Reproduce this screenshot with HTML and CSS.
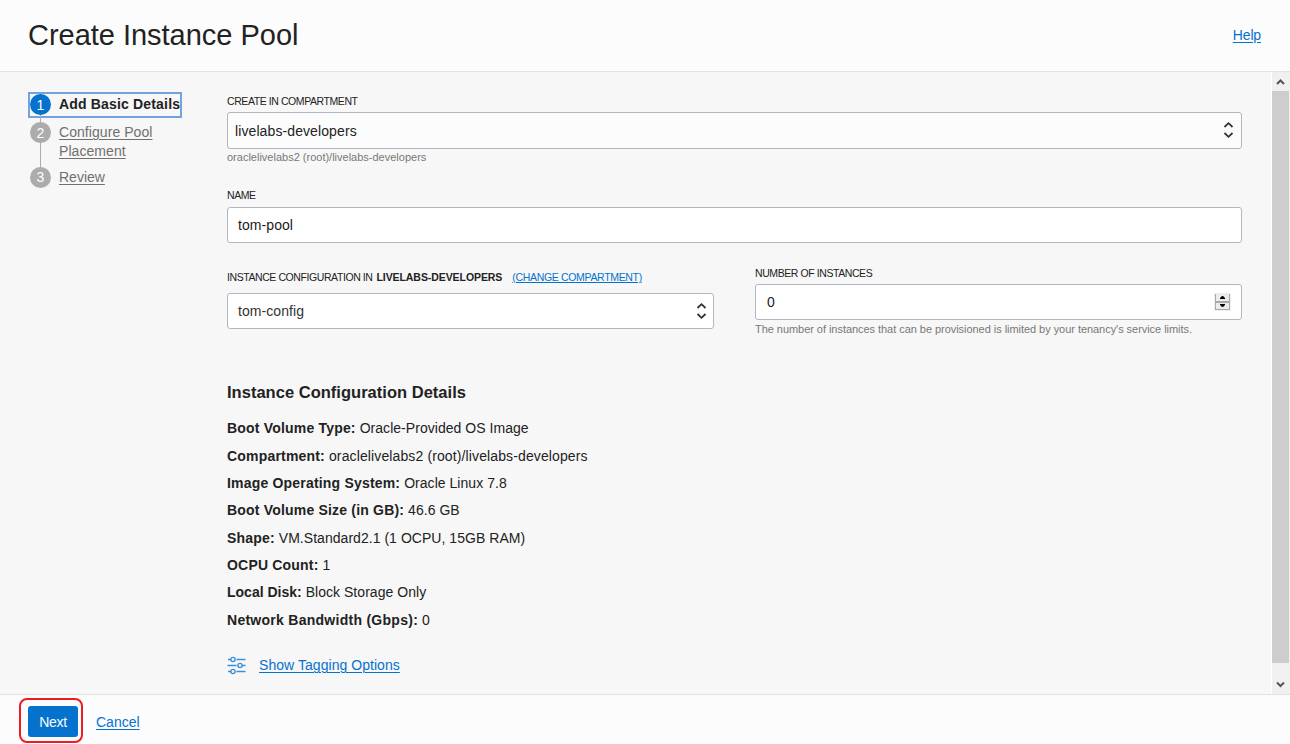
FILE: index.html
```html
<!DOCTYPE html>
<html lang="en">
<head>
<meta charset="utf-8">
<title>Create Instance Pool</title>
<link rel="stylesheet" href="styles.css">
</head>
<body>
<header class="header">
  <h1 class="title">Create Instance Pool</h1>
  <a class="link help">Help</a>
</header>
<main class="body">
  <nav class="steps">
    <div class="step current"><span class="num">1</span><b class="step-text">Add Basic Details</b></div>
    <div class="step two"><span class="num">2</span><span class="step-text">Configure Pool<br>Placement</span></div>
    <div class="step"><span class="num">3</span><span class="step-text">Review</span></div>
  </nav>
  <section class="form">
    <label class="label l-compartment">CREATE IN COMPARTMENT</label>
    <div class="field picker"><span>livelabs-developers</span>
      <svg class="chev" width="10" height="16" viewBox="0 0 10 16"><path d="M1.500 5 5.500 1.200 9.500 5M1.500 11l4 3.800 4-3.800"/></svg></div>
    <p class="hint">oraclelivelabs2 (root)/livelabs-developers</p>
    <label class="label l-name">NAME</label>
    <div class="field">tom-pool</div>
    <div class="row">
      <div class="col config">
        <div class="label l-config"><span class="lead">INSTANCE CONFIGURATION IN</span> <b>LIVELABS-DEVELOPERS</b><a class="link change">(CHANGE COMPARTMENT)</a></div>
        <div class="field soft"><span>tom-config</span>
          <svg class="chev" width="10" height="16" viewBox="0 0 10 16"><path d="M1.500 5 5.500 1.200 9.500 5M1.500 11l4 3.800 4-3.800"/></svg></div>
      </div>
      <div class="col count">
        <label class="label l-count">NUMBER OF INSTANCES</label>
        <div class="field number"><span>0</span>
          <svg class="spin" width="17" height="18" viewBox="0 0 17 18"><path fill="#f0f0f0" d="M0 0h17v18H0z"/><path fill="#aaa" d="M1 1h15v16H1z"/><path fill="#ececec" d="M2 0h13v8H2zM2 10h13v6H2z"/><path fill="#000" d="M6 6V5l2-2h1l2 2v1zM6 11h5v1l-2 2H8l-2-2z"/></svg></div>
        <p class="hint limits">The number of instances that can be provisioned is limited by your tenancy's service limits.</p>
      </div>
    </div>
    <h2 class="subtitle">Instance Configuration Details</h2>
    <div class="details">
      <p><b>Boot Volume Type:</b> Oracle-Provided OS Image</p>
      <p class="loose"><b>Compartment:</b> oraclelivelabs2 (root)/livelabs-developers</p>
      <p><b>Image Operating System:</b> Oracle Linux 7.8</p>
      <p><b>Boot Volume Size (in GB):</b> 46.6 GB</p>
      <p><b>Shape:</b> VM.Standard2.1 (1 OCPU, 15GB RAM)</p>
      <p><b>OCPU Count:</b> 1</p>
      <p><b class="tight">Local Disk:</b> Block Storage Only</p>
      <p><b class="wide">Network Bandwidth (Gbps):</b> 0</p>
    </div>
    <div class="tagging">
      <svg width="19" height="19" viewBox="0 0 19 19"><path d="M1 3.500h3M9.500 3.500H18.500M.5 9.500H9.500M15 9.500H18.500M1 15.500h3M9.500 15.500H18.500"/><circle cx="6" cy="3.500" r="2.100"/><circle cx="13" cy="9.500" r="2.100"/><circle cx="6" cy="15.500" r="2.100"/></svg>
      <a class="link">Show Tagging Options</a>
    </div>
  </section>
  <div class="scroll">
    <svg class="arrow" width="17" height="19" viewBox="0 0 17 19"><path d="M5 12 8.500 8.500l3.500 3.500"/></svg>
    <div class="thumb"></div>
    <svg class="arrow" width="17" height="19" viewBox="0 0 17 19"><path d="M5 7.500 8.500 11l3.500-3.500"/></svg>
  </div>
</main>
<footer class="footer">
  <div class="highlight"><span class="next">Next</span></div>
  <a class="link">Cancel</a>
</footer>
</body>
</html>
```

FILE: styles.css
```css
* { box-sizing: border-box; }
body { margin: 0; width: 1290px; height: 744px; overflow: hidden; display: flex; flex-direction: column; background: #fcfcfc; color: #222; font: 14px/20px "Liberation Sans", Arial, sans-serif; white-space: nowrap; }
h1, h2, p { margin: 0; }
.header { height: 72px; border-bottom: 1px solid #e1e1e1; display: flex; justify-content: space-between; align-items: center; padding: 0 29px 0 28px; }
.title { font-size: 29px; line-height: 34px; font-weight: 400; letter-spacing: -.02px; padding-bottom: 2px; }
.link { color: #0572ce; text-decoration: underline; text-decoration-thickness: 1px; text-underline-offset: 2px; line-height: 16px; }
.help { letter-spacing: -.15px; padding-bottom: 2px; }
.body { height: 622px; background: #f7f7f7; display: flex; }
.steps { width: 227px; padding: 20px 0 0 28px; color: #707070; }
.step { display: flex; padding-left: 2px; gap: 8px; height: 25px; position: relative; }
.step.two { height: 45px; }
.num { width: 21px; height: 21px; border-radius: 50%; background: #acacac; color: #fff; text-align: center; line-height: 22px; margin-top: 2px; flex: none; z-index: 1; }
.step:last-child .num { margin-top: 1.5px; line-height: 21px; }
.current { width: 154px; height: 26px; border: 2px solid #73a3dc; padding-left: 0; margin-bottom: 2px; color: #222; }
.current .num { background: #0572ce; margin-top: 0; }
.current .step-text { line-height: 20px; letter-spacing: .17px; }
.two .step-text, .step:last-child .step-text { line-height: 19px; padding-top: 3px; text-decoration: underline; text-underline-offset: 2px; }
.two .step-text { letter-spacing: .06px; }
.current::after, .two::after { content: ""; position: absolute; left: 10px; top: 20px; width: 1px; height: 10px; background: #acacac; }
.two::after { left: 12px; top: 20px; height: 30px; }
.form { width: 1015px; display: flex; flex-direction: column; }
.label { font-size: 10.5px; line-height: 14px; letter-spacing: -.42px; }
.l-compartment { margin-top: 22px; height: 18px; }
.l-name { margin-top: 24px; height: 19px; }
.field { height: 36px; border: 1px solid #b1b6c2; border-radius: 3px; background: #fff; padding: 0 10px; display: flex; align-items: center; justify-content: space-between; color: #222; letter-spacing: .07px; }
.picker { height: 37px; background: #fcfcfc; padding-left: 7px; padding-right: 8px; letter-spacing: .1px; }
.soft { padding-right: 7px; color: #333; }
.number { padding-left: 11px; }
.chev { fill: none; stroke: #333; stroke-width: 1.8; overflow: visible; }
.picker .chev { margin-bottom: 2px; }
.hint { font-size: 11px; line-height: 14px; margin-top: 1px; color: #777; }
.limits { margin-top: 2px; letter-spacing: -.045px; }
.row { display: flex; gap: 41px; margin-top: 23px; }
.col { width: 487px; }
.l-config { margin-top: 4px; height: 23px; display: flex; gap: 4px; }
.l-config b { letter-spacing: -.07px; }
.l-config .link { line-height: 14px; margin-left: 6px; letter-spacing: -.33px; text-underline-offset: 1px; }
.l-count { display: block; height: 18px; }
.subtitle { font-size: 16.5px; line-height: 20px; margin-top: 46px; letter-spacing: .02px; }
.details { margin-top: 16.15px; display: grid; grid-auto-rows: 27.38px; letter-spacing: .04px; }
.details b { letter-spacing: .19px; }
.details .loose { letter-spacing: .12px; }
.details .tight { letter-spacing: 0; }
.details .wide { letter-spacing: .27px; }
.tagging { display: flex; gap: 13px; align-items: center; margin-top: 18.81px; height: 20px; letter-spacing: .05px; }
.tagging .link { padding-bottom: 2px; }
.tagging svg { fill: none; stroke: #3d8fd8; stroke-width: 1.4; }
.scroll { width: 19px; margin-left: 29px; border-left: 1px solid #fff; background: #f0f0f0; display: flex; flex-direction: column; }
.thumb { width: 17px; height: 572px; background: #cdcdcd; margin-bottom: 12px; }
.arrow { fill: none; stroke: #555; stroke-width: 2; flex: none; }
.footer { height: 50px; border-top: 1px solid #e1e1e1; display: flex; align-items: flex-start; padding: 3px 0 0 19px; }
.highlight { width: 64px; height: 45px; border: 2px solid #ed1c24; border-radius: 8px; display: flex; padding: 6px 0 0 7px; margin-right: 13px; }
.next { width: 50px; height: 31px; border-radius: 3px; background: #0572ce; color: #fff; text-align: center; line-height: 32px; letter-spacing: -.3px; }
.footer .link { margin-top: 16px; }
```
